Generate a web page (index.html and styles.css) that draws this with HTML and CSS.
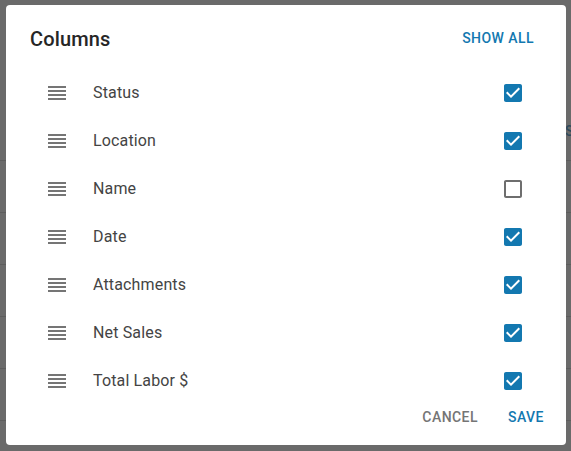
FILE: index.html
```html
<!DOCTYPE html>
<html lang="en">
<head>
<meta charset="utf-8">
<title>Columns</title>
<link rel="stylesheet" href="styles.css">
</head>
<body>
<div class="page">
  <div class="bg-header"><span class="bg-head-text">Sales</span></div>
  <div class="bg-row"></div>
  <div class="bg-row"></div>
  <div class="bg-row"></div>
  <div class="bg-row"></div>
  <div class="bg-row"></div>
  <div class="bg-row"></div>
</div>

<div class="dialog" role="dialog" aria-labelledby="dlg-title">
  <div class="dialog-header">
    <h2 class="dialog-title" id="dlg-title">Columns</h2>
    <button class="btn btn-primary btn-showall">SHOW ALL</button>
  </div>

  <ul class="col-list">
    <li class="col-row">
      <svg class="drag" viewBox="0 0 24 24"><path d="M3 15h18v-2H3v2zm0 4h18v-2H3v2zm0-8h18V9H3v2zm0-6v2h18V5H3z"/></svg>
      <span class="col-name">Status</span>
      <svg class="cb cb-on" viewBox="0 0 24 24"><path d="M19 3H5c-1.11 0-2 .9-2 2v14c0 1.1.89 2 2 2h14c1.11 0 2-.9 2-2V5c0-1.1-.89-2-2-2zm-9 14l-5-5 1.41-1.41L10 14.17l7.59-7.59L19 8l-9 9z"/></svg>
    </li>
    <li class="col-row">
      <svg class="drag" viewBox="0 0 24 24"><path d="M3 15h18v-2H3v2zm0 4h18v-2H3v2zm0-8h18V9H3v2zm0-6v2h18V5H3z"/></svg>
      <span class="col-name">Location</span>
      <svg class="cb cb-on" viewBox="0 0 24 24"><path d="M19 3H5c-1.11 0-2 .9-2 2v14c0 1.1.89 2 2 2h14c1.11 0 2-.9 2-2V5c0-1.1-.89-2-2-2zm-9 14l-5-5 1.41-1.41L10 14.17l7.59-7.59L19 8l-9 9z"/></svg>
    </li>
    <li class="col-row">
      <svg class="drag" viewBox="0 0 24 24"><path d="M3 15h18v-2H3v2zm0 4h18v-2H3v2zm0-8h18V9H3v2zm0-6v2h18V5H3z"/></svg>
      <span class="col-name">Name</span>
      <svg class="cb cb-off" viewBox="0 0 24 24"><path d="M19 5v14H5V5h14m0-2H5c-1.1 0-2 .9-2 2v14c0 1.1.9 2 2 2h14c1.1 0 2-.9 2-2V5c0-1.1-.9-2-2-2z"/></svg>
    </li>
    <li class="col-row">
      <svg class="drag" viewBox="0 0 24 24"><path d="M3 15h18v-2H3v2zm0 4h18v-2H3v2zm0-8h18V9H3v2zm0-6v2h18V5H3z"/></svg>
      <span class="col-name">Date</span>
      <svg class="cb cb-on" viewBox="0 0 24 24"><path d="M19 3H5c-1.11 0-2 .9-2 2v14c0 1.1.89 2 2 2h14c1.11 0 2-.9 2-2V5c0-1.1-.89-2-2-2zm-9 14l-5-5 1.41-1.41L10 14.17l7.59-7.59L19 8l-9 9z"/></svg>
    </li>
    <li class="col-row">
      <svg class="drag" viewBox="0 0 24 24"><path d="M3 15h18v-2H3v2zm0 4h18v-2H3v2zm0-8h18V9H3v2zm0-6v2h18V5H3z"/></svg>
      <span class="col-name">Attachments</span>
      <svg class="cb cb-on" viewBox="0 0 24 24"><path d="M19 3H5c-1.11 0-2 .9-2 2v14c0 1.1.89 2 2 2h14c1.11 0 2-.9 2-2V5c0-1.1-.89-2-2-2zm-9 14l-5-5 1.41-1.41L10 14.17l7.59-7.59L19 8l-9 9z"/></svg>
    </li>
    <li class="col-row">
      <svg class="drag" viewBox="0 0 24 24"><path d="M3 15h18v-2H3v2zm0 4h18v-2H3v2zm0-8h18V9H3v2zm0-6v2h18V5H3z"/></svg>
      <span class="col-name">Net Sales</span>
      <svg class="cb cb-on" viewBox="0 0 24 24"><path d="M19 3H5c-1.11 0-2 .9-2 2v14c0 1.1.89 2 2 2h14c1.11 0 2-.9 2-2V5c0-1.1-.89-2-2-2zm-9 14l-5-5 1.41-1.41L10 14.17l7.59-7.59L19 8l-9 9z"/></svg>
    </li>
    <li class="col-row">
      <svg class="drag" viewBox="0 0 24 24"><path d="M3 15h18v-2H3v2zm0 4h18v-2H3v2zm0-8h18V9H3v2zm0-6v2h18V5H3z"/></svg>
      <span class="col-name">Total Labor $</span>
      <svg class="cb cb-on" viewBox="0 0 24 24"><path d="M19 3H5c-1.11 0-2 .9-2 2v14c0 1.1.89 2 2 2h14c1.11 0 2-.9 2-2V5c0-1.1-.89-2-2-2zm-9 14l-5-5 1.41-1.41L10 14.17l7.59-7.59L19 8l-9 9z"/></svg>
    </li>
  </ul>

  <div class="dialog-actions">
    <button class="btn btn-muted">CANCEL</button>
    <button class="btn btn-primary">SAVE</button>
  </div>
</div>
</body>
</html>
```

FILE: styles.css
```css
html, body {
  margin: 0;
  padding: 0;
}

body {
  width: 571px;
  height: 451px;
  overflow: hidden;
  background: #6a6a6a;
  font-family: Roboto, "Liberation Sans", Arial, sans-serif;
  position: relative;
}

/* dimmed page underneath the dialog */
.page {
  width: 571px;
}

.bg-header {
  height: 160px;
  position: relative;
}

.bg-head-text {
  position: absolute;
  left: 565px;
  top: 123px;
  font-size: 14px;
  color: #2f4a5c;
  font-weight: 500;
}

.bg-row {
  height: 52px;
  box-sizing: border-box;
  border-top: 1px solid #5d5d5d;
}

/* dialog */
.dialog {
  position: absolute;
  left: 6px;
  top: 5px;
  width: 560px;
  height: 440px;
  background: #ffffff;
  border-radius: 4px;
  box-sizing: border-box;
  display: flex;
  flex-direction: column;
  overflow: hidden;
}

.dialog-header {
  height: 64px;
  display: flex;
  align-items: center;
  justify-content: space-between;
  padding: 0 24px 0 24px;
  flex: none;
}

.dialog-title {
  margin: 4px 0 0 0;
  font-size: 20px;
  font-weight: 500;
  color: #262626;
  letter-spacing: 0.15px;
  line-height: 32px;
}

.btn {
  border: none;
  background: transparent;
  font-family: Roboto, "Liberation Sans", Arial, sans-serif;
  font-size: 14px;
  font-weight: 500;
  letter-spacing: 0.45px;
  height: 24px;
  min-width: 64px;
  padding: 0 8px;
  line-height: 24px;
  cursor: pointer;
  border-radius: 4px;
}

.btn-primary {
  color: #1378b0;
}

.btn-muted {
  color: #757575;
}

.btn-showall {
  margin-top: 2px;
}

.col-list {
  list-style: none;
  margin: 0;
  padding: 0;
  flex: none;
}

.col-row {
  height: 48px;
  display: flex;
  align-items: center;
  padding: 0 41px 0 39px;
}

.drag {
  width: 24px;
  height: 24px;
  fill: #757575;
  flex: none;
}

.col-name {
  flex: 1;
  margin-left: 24px;
  padding-bottom: 2px;
  font-size: 16px;
  color: #444444;
  letter-spacing: 0.15px;
}

.cb {
  width: 24px;
  height: 24px;
  flex: none;
}

.cb-on {
  fill: #1378b0;
}

.cb-off {
  fill: #6e6e6e;
}

.dialog-actions {
  display: flex;
  justify-content: flex-end;
  gap: 8px;
  padding: 0 8px 16px 8px;
  flex: none;
}
```
